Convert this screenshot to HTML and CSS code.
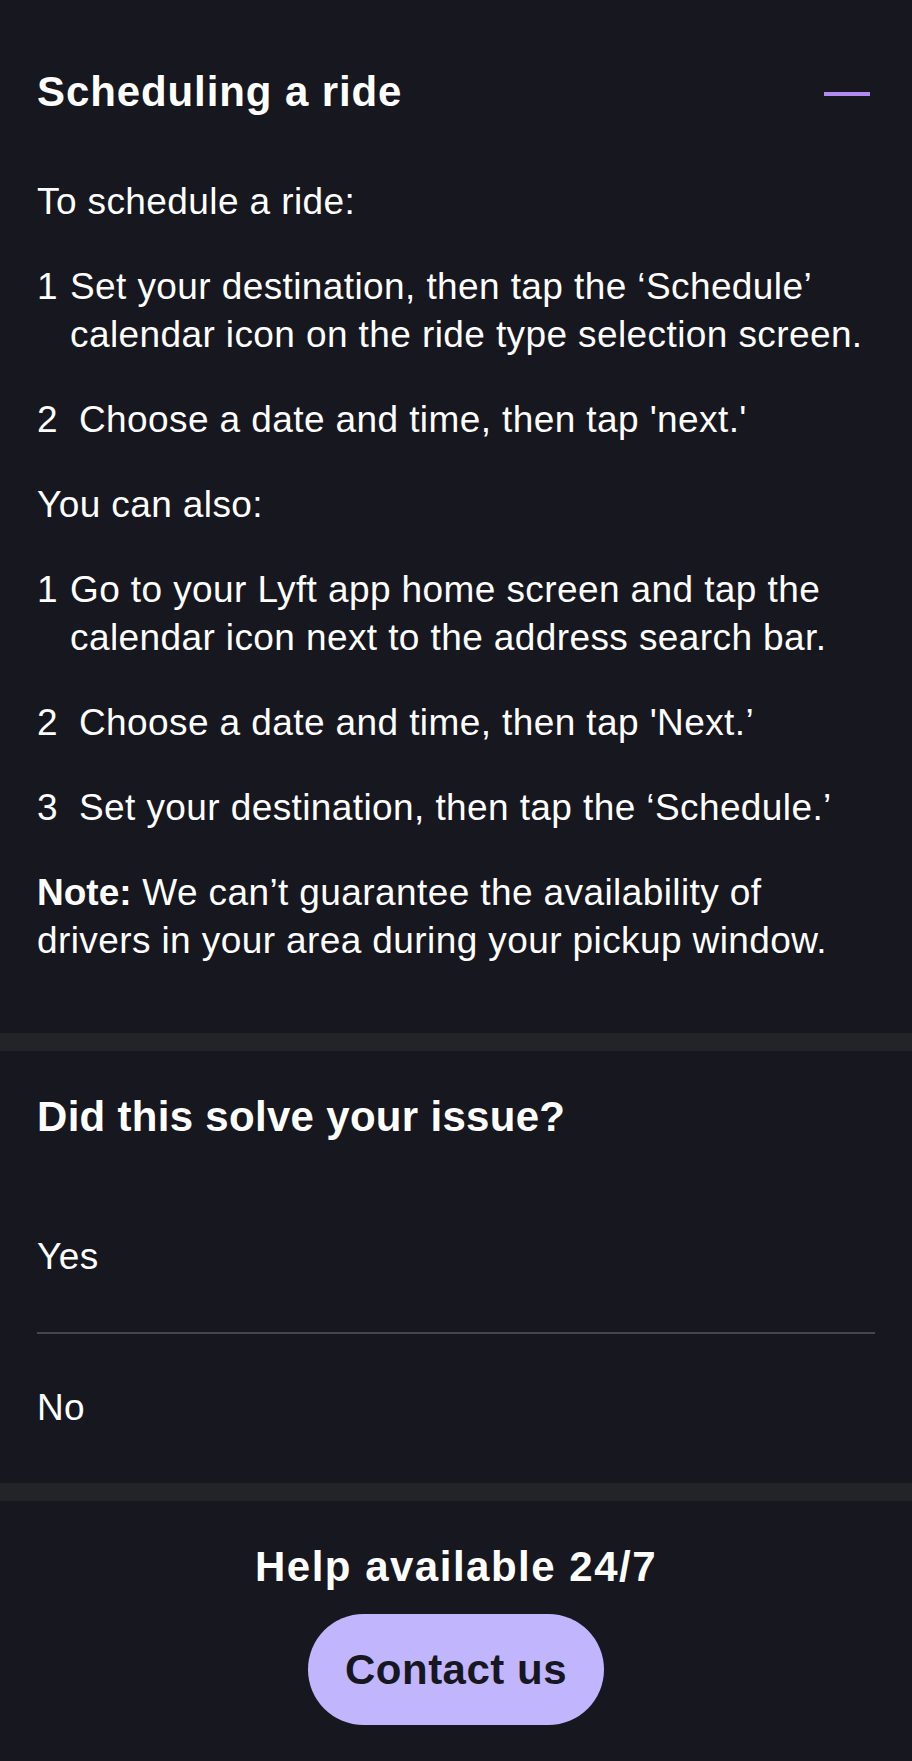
FILE: index.html
```html
<!DOCTYPE html>
<html lang="en">
<head>
<meta charset="utf-8">
<title>Scheduling a ride</title>
<link rel="stylesheet" href="styles.css">
</head>
<body>
<main class="page">
  <section class="article">
    <div class="article-header">
      <h1 class="article-title">Scheduling a ride</h1>
      <button class="collapse-btn" aria-label="Collapse"><span class="minus"></span></button>
    </div>
    <div class="article-body">
      <p>To schedule a ride:</p>
      <p class="step"><span class="step-num">1</span><span class="step-text">Set your destination, then tap the ‘Schedule’ calendar icon on the ride type selection screen.</span></p>
      <p class="step"><span class="step-num wide">2</span><span class="step-text">Choose a date and time, then tap 'next.'</span></p>
      <p>You can also:</p>
      <p class="step"><span class="step-num">1</span><span class="step-text">Go to your Lyft app home screen and tap the calendar icon next to the address search bar.</span></p>
      <p class="step"><span class="step-num wide">2</span><span class="step-text">Choose a date and time, then tap 'Next.’</span></p>
      <p class="step"><span class="step-num wide">3</span><span class="step-text">Set your destination, then tap the ‘Schedule.’</span></p>
      <p><strong>Note:</strong> We can’t guarantee the availability of drivers in your area during your pickup window.</p>
    </div>
  </section>

  <section class="feedback">
    <h2 class="feedback-title">Did this solve your issue?</h2>
    <div class="options">
      <button class="option">Yes</button>
      <button class="option">No</button>
    </div>
  </section>

  <section class="help">
    <h2 class="help-title">Help available 24/7</h2>
    <button class="contact-btn">Contact us</button>
  </section>
</main>
</body>
</html>
```

FILE: styles.css
```css
* {
  box-sizing: border-box;
}

html, body {
  margin: 0;
  padding: 0;
  background: #17171f;
}

body {
  font-family: "Liberation Sans", Arial, sans-serif;
  color: #ffffff;
}

.page {
  display: flex;
  flex-direction: column;
}

.article {
  padding: 66px 37px 68px 37px;
  border-bottom: 18px solid #232428;
}

.article-header {
  display: flex;
  align-items: center;
  justify-content: space-between;
}

.article-title {
  margin: 0;
  font-size: 42px;
  line-height: 52px;
  font-weight: 700;
  letter-spacing: 0.9px;
}

.collapse-btn {
  background: none;
  border: 0;
  padding: 0;
  margin-right: 5px;
  display: flex;
  align-items: center;
  cursor: pointer;
}

.minus {
  display: block;
  width: 46px;
  height: 4px;
  background: #b18af2;
  margin-top: 4px;
}

.article-body {
  margin-top: 60px;
  font-size: 37px;
  line-height: 48px;
  letter-spacing: 0.4px;
}

.article-body p {
  margin: 0 0 37px 0;
}

.article-body p:last-child {
  margin-bottom: 0;
}

.article-body strong {
  font-weight: 700;
  letter-spacing: 0;
}

.step {
  display: flex;
}

.step-num {
  flex: 0 0 33px;
}

.step-num.wide {
  flex-basis: 42px;
}

.step-text {
  flex: 1;
}

.feedback {
  padding: 40px 37px 0 37px;
  border-bottom: 18px solid #232428;
}

.feedback-title {
  margin: 0 0 40px 0;
  font-size: 42px;
  line-height: 52px;
  font-weight: 700;
  letter-spacing: 0.3px;
}

.options {
  display: flex;
  flex-direction: column;
}

.option {
  display: block;
  width: 100%;
  text-align: left;
  background: none;
  border: 0;
  color: #ffffff;
  font-family: "Liberation Sans", Arial, sans-serif;
  font-size: 37px;
  line-height: 48px;
  letter-spacing: 0.4px;
  padding: 50px 0 51px 0;
  cursor: pointer;
}

.option + .option {
  border-top: 2px solid #46474d;
}

.help {
  padding: 40px 37px 36px 37px;
  display: flex;
  flex-direction: column;
  align-items: center;
}

.help-title {
  margin: 0 0 21px 0;
  font-size: 42px;
  line-height: 52px;
  font-weight: 700;
  letter-spacing: 1.5px;
}

.contact-btn {
  width: 296px;
  height: 111px;
  border: 0;
  border-radius: 56px;
  background: #c1b6fd;
  color: #17171f;
  font-family: "Liberation Sans", Arial, sans-serif;
  font-size: 42px;
  font-weight: 700;
  letter-spacing: 0.5px;
  display: flex;
  align-items: center;
  justify-content: center;
  cursor: pointer;
}
```
